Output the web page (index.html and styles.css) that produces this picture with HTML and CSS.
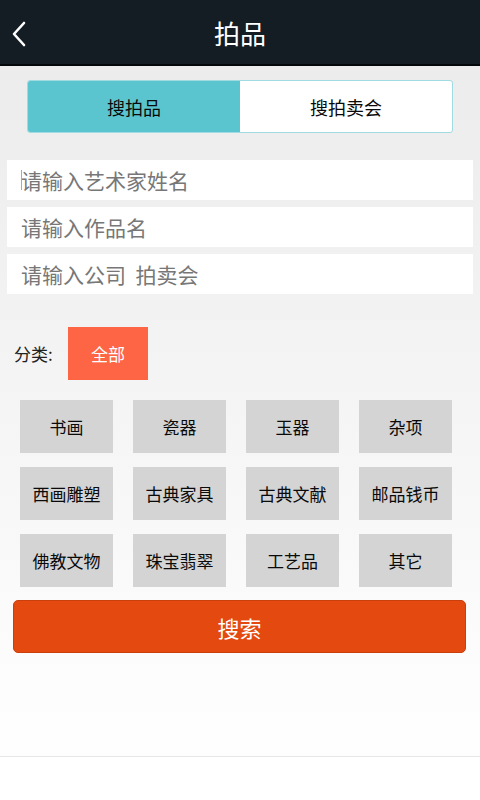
FILE: index.html
```html
<!DOCTYPE html>
<html lang="zh">
<head>
    <meta charset="UTF-8">
    <title>拍品</title>
    <link rel="stylesheet" href="styles.css">
</head>
<body>
<div class="header">
    <svg class="back" width="16" height="26" viewBox="0 0 16 26">
        <path d="M13 2 L3 13 L13 24" fill="none" stroke="#fff" stroke-width="2.6" stroke-linecap="round" stroke-linejoin="round"/>
    </svg>
    <h1>拍品</h1>
</div>

<div class="main">
    <div class="tabs">
        <div class="tab active">搜拍品</div>
        <div class="tab">搜拍卖会</div>
    </div>

    <div class="fields">
        <div class="field-wrap">
            <span class="caret"></span>
            <input type="text" class="field" placeholder="请输入艺术家姓名">
        </div>
        <input type="text" class="field" placeholder="请输入作品名">
        <input type="text" class="field" placeholder="请输入公司  拍卖会">
    </div>

    <div class="category">
        <span class="label">分类:</span>
        <div class="all">全部</div>
    </div>

    <div class="grid">
        <div class="cell">书画</div>
        <div class="cell">瓷器</div>
        <div class="cell">玉器</div>
        <div class="cell">杂项</div>
        <div class="cell">西画雕塑</div>
        <div class="cell">古典家具</div>
        <div class="cell">古典文献</div>
        <div class="cell">邮品钱币</div>
        <div class="cell">佛教文物</div>
        <div class="cell">珠宝翡翠</div>
        <div class="cell">工艺品</div>
        <div class="cell">其它</div>
    </div>

    <div class="search">搜索</div>
</div>
<div class="footer"></div>
</body>
</html>
```

FILE: styles.css
```css
html, body {
    margin: 0;
    padding: 0;
    height: 800px;
    font-family: "Noto Sans CJK SC", "Noto Sans", sans-serif;
    background: #fff;
}

.header {
    height: 64px;
    background-color: #141c24;
    border-bottom: 2px solid #05080b;
    display: flex;
    align-items: center;
    justify-content: center;
    position: relative;
}

.header h1 {
    margin: 0;
    color: #fff;
    font-size: 26px;
    font-weight: 400;
}

.back {
    position: absolute;
    left: 11px;
    top: 21px;
}

.main {
    height: 691px;
    background: linear-gradient(#ececec, #f3f3f3 40%, #fdfdfd 90%, #fefefe);
    padding-top: 14px;
    box-sizing: border-box;
    border-bottom: 1px solid #e6e6e6;
}

.tabs {
    display: flex;
    margin: 0 27px;
    height: 53px;
    border: 1px solid #9fdbe0;
    border-radius: 3px;
    box-sizing: border-box;
    overflow: hidden;
    background: #fff;
}

.tab {
    flex: 1;
    display: flex;
    align-items: center;
    justify-content: center;
    font-size: 18px;
    color: #0a0a0a;
}

.tab.active {
    background-color: #5bc5cf;
}

.fields {
    margin: 27px 7px 0 7px;
    display: flex;
    flex-direction: column;
    gap: 7px;
}

.field-wrap {
    position: relative;
}

.caret {
    position: absolute;
    left: 14px;
    top: 10px;
    width: 1px;
    height: 20px;
    background: #aaa;
}

.field {
    display: block;
    height: 40px;
    border: none;
    outline: none;
    background: #fff;
    padding: 0 0 0 14px;
    font-size: 21px;
    font-family: "Noto Sans CJK SC", sans-serif;
    box-sizing: border-box;
    width: 100%;
}

.field::placeholder {
    color: #777;
}

.category {
    display: flex;
    align-items: center;
    margin: 33px 0 0 14px;
}

.label {
    font-size: 17px;
    color: #222;
    width: 54px;
}

.all {
    width: 80px;
    height: 53px;
    background-color: #fd6544;
    color: #fff;
    font-size: 17px;
    display: flex;
    align-items: center;
    justify-content: center;
}

.grid {
    display: grid;
    grid-template-columns: repeat(4, 93px);
    column-gap: 20px;
    row-gap: 14px;
    margin: 20px 0 0 20px;
}

.cell {
    height: 53px;
    background-color: #d4d4d4;
    display: flex;
    align-items: center;
    justify-content: center;
    font-size: 17px;
    color: #0a0a0a;
}

.search {
    margin: 13px 14px 0 13px;
    height: 53px;
    background-color: #e4490f;
    border: 1px solid #c9400d;
    box-sizing: border-box;
    border-radius: 5px;
    color: #fff;
    font-size: 22px;
    display: flex;
    align-items: center;
    justify-content: center;
}

.footer {
    height: 45px;
    background: #fff;
}
```
